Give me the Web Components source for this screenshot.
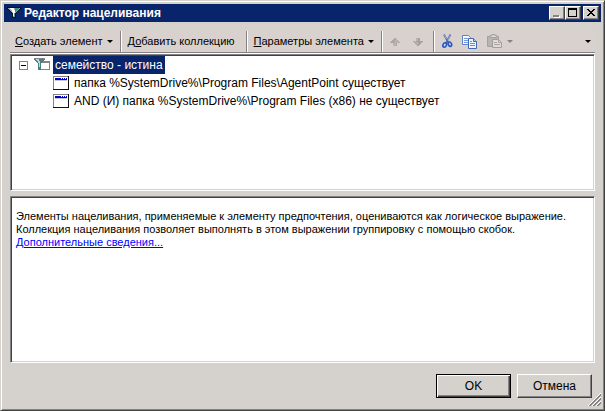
<!DOCTYPE html>
<html lang="ru">
<head>
<meta charset="utf-8">
<title>Редактор нацеливания</title>
<style>
  html, body { margin: 0; }
  body {
    --face: #d5d2cd;
    --navy: #08246b;
    --shade: #848284;
    --dark: #424142;
    font: 11px/13px "Liberation Sans", Arial, sans-serif;
    color: #000;
  }
</style>
</head>
<body>
<target-editor></target-editor>

<script>
const define = (name, html, init) => {
  const template = document.createElement('template');
  template.innerHTML = html;
  customElements.define(name, class extends HTMLElement {
    constructor() {
      super();
      this.attachShadow({ mode: 'open' }).append(template.content.cloneNode(true));
    }
    connectedCallback() { if (init) init(this, this.shadowRoot); }
  });
};

define('caption-button', `
  <style>
    :host { display: block; }
    button {
      display: block; box-sizing: border-box; width: 16px; height: 14px; padding: 0; border: 1px solid;
      border-color: #fff var(--dark) var(--dark) #fff; background: var(--face);
      box-shadow: inset -1px -1px var(--shade); color: inherit;
    }
    ::slotted(svg) { display: block; }
  </style>
  <button type="button"><slot></slot></button>`,
  (host, root) => root.querySelector('button').setAttribute('aria-label', host.getAttribute('label')));

define('title-bar', `
  <style>
    :host { display: flex; align-items: center; height: 18px; padding: 0 2px 0 3px; background: var(--navy); color: #fff; }
    h1 { flex: 1; margin: 0 0 0 2px; font-size: 12px; font-weight: bold; line-height: 18px; white-space: nowrap; }
    .buttons { display: flex; color: #000; }
    .close { margin-left: 2px; }
    svg { display: block; }
  </style>
  <svg width="15" height="12" viewBox="0 0 15 12" shape-rendering="crispEdges" aria-hidden="true">
    <path d="M0 0h14v2h-1v1h-1v1h-1v1h-1v1h-1v5H5V6H4V5H3V4H2V3H1V2H0z" fill="#101010"/>
    <path d="M1 1h12v1h-1v1h-1v1h-1v1H9v1H8v4H6V6H5V5H4V4H3V3H2V2H1z" fill="#9aa7a7"/>
    <path d="M3 1h4v2h1v3H6V5H5V3H4V2H3zM6 6h1v3H6z" fill="#fff"/>
    <path d="M8 1h4v1h-1v1h-1v1H9v1H8z" fill="#3c8c8c"/>
    <path d="M7 6h1v4H7z" fill="#5c9c9c"/>
  </svg>
  <h1><slot></slot></h1>
  <div class="buttons">
    <caption-button label="Свернуть"><svg width="14" height="12" shape-rendering="crispEdges"><path d="M4 9h6v2H4z" fill="#fff"/><path d="M3 8h6v2H3z" fill="#848284"/></svg></caption-button>
    <caption-button label="Развернуть"><svg width="14" height="12" shape-rendering="crispEdges"><path d="M2 1h9v9H2zM3 3v6h7V3z" fill-rule="evenodd"/></svg></caption-button>
    <caption-button class="close" label="Закрыть"><svg width="14" height="12" shape-rendering="crispEdges"><path d="M3 2h2v1h1v1h2V3h1V2h2v1h-1v1H9v1H8v1h1v1h1v1h1v1H9V8H8V7H6v1H5v1H3V8h1V7h1V6h1V5H5V4H4V3H3z"/></svg></caption-button>
  </div>`);

define('tool-button', `
  <style>
    :host { display: flex; }
    button {
      display: flex; align-items: center; gap: 4px; padding: 0; border: 0;
      background: none; font: inherit; color: inherit; white-space: nowrap;
    }
    i { width: 0; border: solid transparent; border-width: 3px 3px 0; border-top-color: currentColor; display: none; }
    :host([menu]) i { display: block; }
    button:disabled { color: #848284; }
    ::slotted(svg) { display: block; }
  </style>
  <button type="button"><slot></slot><i></i></button>`,
  (host, root) => {
    const b = root.querySelector('button');
    if (host.hasAttribute('label')) b.setAttribute('aria-label', host.getAttribute('label'));
    b.disabled = host.hasAttribute('off');
    if (host.hasAttribute('menu')) b.setAttribute('aria-haspopup', 'menu');
  });

define('tool-bar', `
  <style>
    :host {
      display: flex; align-items: stretch; height: 21px; padding-left: 5px;
      background: #d8d1cd; border-bottom: 1px solid var(--shade); box-shadow: 0 1px #fff;
    }
    hr { flex: none; margin: 0; width: 1px; border: 0; background: var(--shade); box-shadow: 1px 0 #fff; }
    .group { display: flex; gap: 9px; padding: 0 7px; }
    .first { padding-left: 0; }
    .plain { padding-right: 11px; }
    .moves { gap: 11px; padding-right: 9px; }
    .edit { padding-left: 8px; }
    .more { margin-left: auto; padding-right: 4px; display: flex; }
    svg { display: block; }
  </style>
  <div class="group first"><tool-button menu><span><u>С</u>оздать элемент</span></tool-button></div><hr>
  <div class="group plain"><tool-button><span>Д<u>о</u>бавить коллекцию</span></tool-button></div><hr>
  <div class="group"><tool-button menu><span><u>П</u>араметры элемента</span></tool-button></div><hr>
  <div class="group moves">
    <tool-button label="Вверх" off><svg width="12" height="8" shape-rendering="crispEdges"><path d="M5 0h2v1h1v1h1v1h1v1h1v1H8v3H4V5H1V4h1V3h1V2h1V1h1z" fill="#aaa6a6"/><path d="M6 1h1v1h1v1h1v1h1v1H7v3H4V5h2z" fill="#b9b4b3"/></svg></tool-button>
    <tool-button label="Вниз" off><svg width="12" height="8" shape-rendering="crispEdges"><path d="M4 0h4v3h3v1h-1v1H9v1H8v1H7v1H5V7H4V6H3V5H2V4H1V3h3z" fill="#a5a1a1"/><path d="M4 0h2v3H4zM2 3h2v1h2v3H5V6H4V5H3z" fill="#b9b4b3"/></svg></tool-button>
  </div><hr>
  <div class="group edit">
    <tool-button label="Вырезать"><svg width="11" height="15" viewBox="0 0 11 15"><path d="M2 0.5L6.5 9M8.5 0.5L4 9" stroke="#536fa3" stroke-width="1.7" fill="none"/><path d="M2.5 1l2 4M8 1.5L6 6" stroke="#a9bad7" stroke-width=".8"/><ellipse cx="2.7" cy="11" rx="1.7" ry="2.3" transform="rotate(25 2.7 11)" fill="#c5d4f2" stroke="#2855bd" stroke-width="1.6"/><ellipse cx="7.9" cy="10.2" rx="1.6" ry="2.2" transform="rotate(-25 7.9 10.2)" fill="#c5d4f2" stroke="#2855bd" stroke-width="1.6"/></svg></tool-button>
    <tool-button label="Копировать"><svg width="16" height="14" viewBox="0 0 16 14"><path d="M.5.5h6l2 2v7h-8z" fill="#f2f7ff" stroke="#6284c7"/><path d="M2 3.5h4M2 5.5h5M2 7.5h5" stroke="#7699dc"/><path d="M6.5 3.5h5l3 3v7h-8z" fill="#edf4ff" stroke="#4169b5"/><path d="M11.5 3.5v3h3" fill="#b5cdf6" stroke="#4169b5"/><path d="M8 6.5h2M8 8.5h5M8 10.5h5" stroke="#6790de"/></svg></tool-button>
    <tool-button label="Вставить" menu off><svg width="16" height="15" viewBox="0 0 16 15"><path d="M.5 2.5h11v10H.5z" fill="#b8b4b2" stroke="#a5a19f"/><path d="M3 3.5v-2h2v-1h3v1h2v2z" fill="#d8d4d2" stroke="#a5a19f"/><path d="M5.5 5.5h6l3 3v5h-9z" fill="#dedad8" stroke="#a19e9c"/><path d="M11.5 5.5v3h3M7 8.5h3M7 10.5h6" fill="none" stroke="#aaa6a4"/></svg></tool-button>
  </div>
  <div class="more"><tool-button label="Параметры панели" menu></tool-button></div>`);

define('sunken-pane', `
  <style>
    :host {
      display: block; box-sizing: border-box; background: #fff; border: 1px solid;
      border-color: var(--shade) #fff #fff var(--shade); padding: 1px;
      box-shadow: inset 1px 1px var(--dark), inset -1px -1px var(--face);
    }
  </style>
  <slot></slot>`);

define('tree-item', `
  <style>
    :host { display: flex; align-items: center; height: 18px; gap: 3px; font-size: 12px; }
    .label { padding: 0 2px; line-height: 18px; white-space: nowrap; }
    :host([selected]) .label { background: var(--navy); color: #fff; }
    ::slotted(svg) { display: block; }
  </style>
  <slot name="icon"></slot><span class="label"><slot></slot></span>`,
  host => host.setAttribute('role', 'treeitem'));

define('condition-tree', `
  <style>
    :host { display: block; }
    .root { display: flex; align-items: center; gap: 6px; padding-left: 7px; }
    .children { padding-left: 41px; }
    button { box-sizing: border-box; width: 9px; height: 9px; padding: 0; border: 1px solid var(--shade); background: linear-gradient(#000, #000) center / 5px 1px no-repeat #fff; }
  </style>
  <div role="tree">
    <div class="root">
      <button type="button" aria-label="Свернуть ветвь"></button>
      <tree-item selected>
        <svg slot="icon" width="16" height="14" shape-rendering="crispEdges"><path d="M6 3h10v9H6z" fill="#848284"/><path d="M7 5h8v6H7z" fill="#fff"/><path d="M0 1h11v1h-1v1H9v1H8v1H7v7H4V5H3V4H2V3H1V2H0z" fill="#4a8284"/><path d="M0 0h11v1H0z" fill="#848284"/><path d="M2 1h3v2h1v6H5V5H4V3H3V2H2z" fill="#b5dede"/></svg>
        семейство - истина
      </tree-item>
    </div>
    <div class="children" role="group"><slot></slot></div>
  </div>`);

define('window-icon', `
  <style>:host { display: block; } svg { display: block; }</style>
  <svg width="16" height="14" shape-rendering="crispEdges" aria-hidden="true"><path d="M0 0h16v14H0z" fill="#848284"/><path d="M15 0h1v14H0v-1h15z" fill="#101010"/><path d="M1 1h14v12H1z" fill="#fff"/><path d="M2 2h12v2H2z" fill="#0000c6"/><path d="M8 2h1v1H8zM10 2h1v1h-1zM12 2h1v1h-1z" fill="#fff"/><path d="M2 4h12v1H2z" fill="#c6c3c6"/></svg>`);

define('dialog-button', `
  <style>
    :host { display: block; }
    button {
      box-sizing: border-box; width: 75px; height: 24px; padding: 0; font: inherit; font-size: 12px; color: inherit;
      background: var(--face); border: 1px solid; border-color: #fff var(--dark) var(--dark) #fff;
      box-shadow: inset -1px -1px var(--shade);
    }
    :host([default]) button { border-color: #000; box-shadow: inset 1px 1px #fff, inset -1px -1px var(--dark), inset -2px -2px var(--shade); }
  </style>
  <button type="button"><slot></slot></button>`);

define('target-editor', `
  <style>
    :host {
      display: flex; flex-direction: column; position: relative; box-sizing: border-box; min-height: 100vh;
      padding: 3px; background: var(--face); border: 1px solid;
      border-color: var(--face) var(--dark) var(--dark) var(--face);
      box-shadow: inset 1px 1px #fff, inset -1px -1px var(--shade);
    }
    main { flex: 1; display: flex; flex-direction: column; padding: 9px 6px 0; }
    .conditions { flex: 137 0 0; margin-top: 1px; }
    .help { flex: 167 0 0; margin-top: 5px; }
    .text { padding: 12px 4px; }
    p { margin: 0; }
    a { color: #00f; }
    footer { display: flex; justify-content: flex-end; gap: 6px; padding: 11px 9px 9px; }
    .grip { position: absolute; right: 3px; bottom: 4px; }
  </style>
  <title-bar>Редактор нацеливания</title-bar>
  <main>
    <tool-bar></tool-bar>
    <sunken-pane class="conditions">
      <condition-tree>
        <tree-item><window-icon slot="icon"></window-icon>папка %SystemDrive%\\Program Files\\AgentPoint существует</tree-item>
        <tree-item><window-icon slot="icon"></window-icon>AND (И) папка %SystemDrive%\\Program Files (x86) не существует</tree-item>
      </condition-tree>
    </sunken-pane>
    <sunken-pane class="help">
      <div class="text">
        <p>Элементы нацеливания, применяемые к элементу предпочтения, оцениваются как логическое выражение. Коллекция нацеливания позволяет выполнять в этом выражении группировку с помощью скобок.</p>
        <a href="#more">Дополнительные сведения...</a>
      </div>
    </sunken-pane>
  </main>
  <footer>
    <dialog-button default>OK</dialog-button>
    <dialog-button>Отмена</dialog-button>
  </footer>
  <svg class="grip" width="13" height="13" shape-rendering="crispEdges" aria-hidden="true"><path d="M0 13L13 0M4 13L13 4M8 13L13 8" stroke="#fff"/><path d="M1 13L13 1M2 13L13 2M5 13L13 5M6 13L13 6M9 13L13 9M10 13L13 10" stroke="#848284"/></svg>`);
</script>
</body>
</html>
